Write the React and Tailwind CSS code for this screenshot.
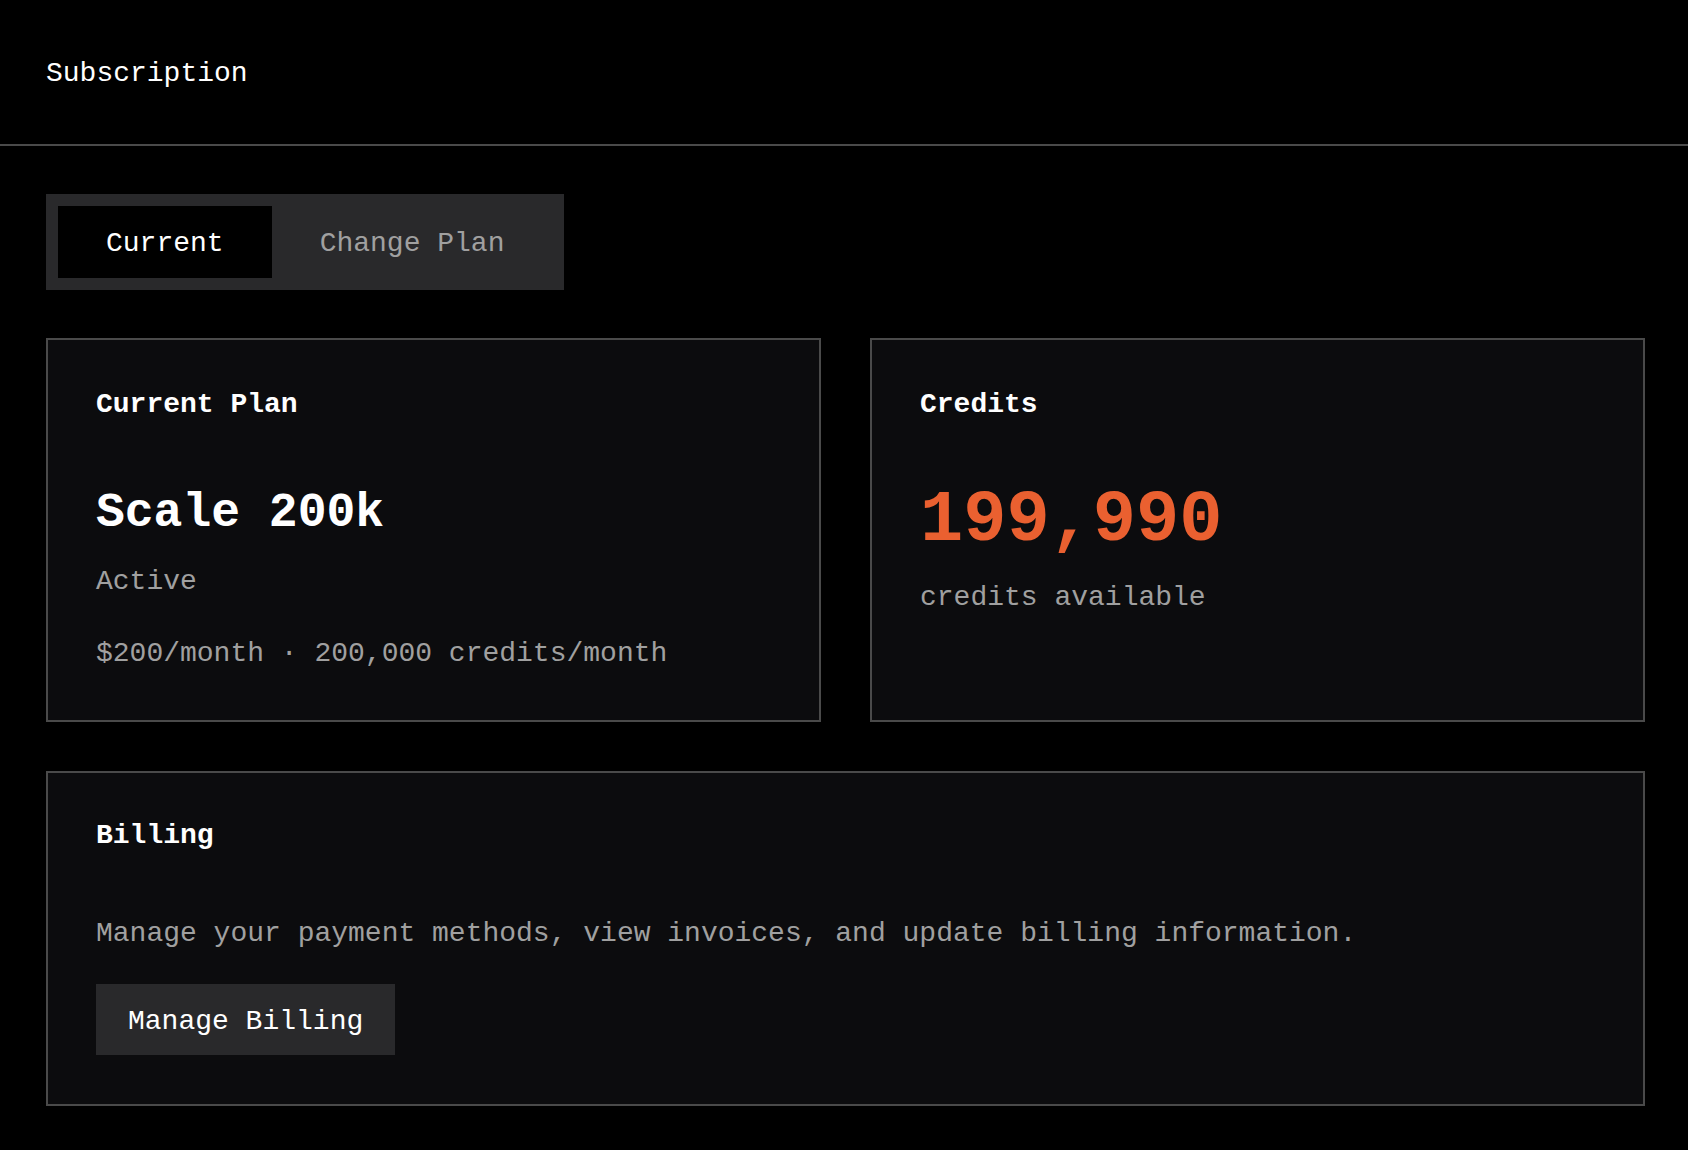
import React, { useState } from 'react';

const Card = ({ title, children, className = '' }) => (
  <div className={`border-2 border-[#4a4a4a] bg-[#0c0c0e] px-[48px] ${className}`}>
    <h3 className="text-[28px] leading-[32px] font-bold text-white">{title}</h3>
    {children}
  </div>
);

const App = () => {
  const [tab, setTab] = useState('current');

  const tabs = [
    { id: 'current', label: 'Current' },
    { id: 'change', label: 'Change Plan' }
  ];

  return (
    <div className="min-h-screen bg-black text-white font-['Liberation_Mono','DejaVu_Sans_Mono',monospace]">
      <header className="h-[146px] border-b-2 border-[#4a4a4a] pl-[46px] pt-[4px] flex items-center">
        <h1 className="text-[28px] leading-[32px] text-white">Subscription</h1>
      </header>

      <main className="pl-[46px] pr-[43px] pt-[48px] pb-[44px]">
        <div className="inline-flex bg-[#29292b] p-3">
          {tabs.map((t) => (
            <button
              key={t.id}
              onClick={() => setTab(t.id)}
              className={`h-[72px] px-12 pt-[4px] text-[28px] leading-[32px] ${
                tab === t.id ? 'bg-black text-white' : 'text-[#a0a0a0]'
              }`}
            >
              {t.label}
            </button>
          ))}
        </div>

        <div className="mt-[48px] grid grid-cols-2 gap-[49px]">
          <Card title="Current Plan" className="pt-[49px] pb-[50px]">
            <div className="mt-[64px] text-[48px] leading-[56px] font-bold text-white">Scale 200k</div>
            <div className="mt-[25px] text-[28px] leading-[32px] text-[#a0a0a0]">Active</div>
            <div className="mt-[40px] text-[28px] leading-[32px] text-[#a0a0a0]">
              $200/month · 200,000 credits/month
            </div>
          </Card>

          <Card title="Credits" className="pt-[49px]">
            <div className="mt-[60px] text-[72px] leading-[80px] font-bold text-[#ea6030]">199,990</div>
            <div className="mt-[21px] text-[28px] leading-[32px] text-[#a0a0a0]">credits available</div>
          </Card>
        </div>

        <Card title="Billing" className="mt-[49px] pt-[47px] pb-[49px]">
          <p className="mt-[66px] text-[28px] leading-[32px] text-[#a0a0a0]">
            Manage your payment methods, view invoices, and update billing information.
          </p>
          <button className="mt-[34px] h-[71px] px-[32px] pt-[4px] bg-[#29292b] text-[28px] leading-[32px] text-white">
            Manage Billing
          </button>
        </Card>
      </main>
    </div>
  );
};

export default App;
